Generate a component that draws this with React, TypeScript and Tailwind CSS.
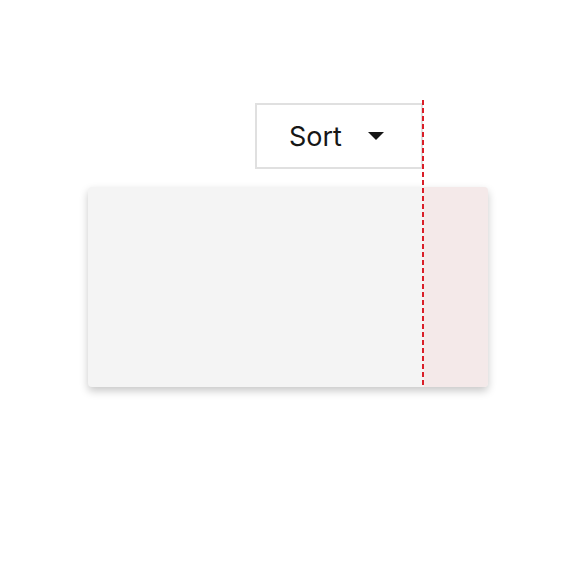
export default function App() {
  return (
    <div className="relative w-[576px] h-[576px] bg-white overflow-hidden font-['Inter','Liberation_Sans',sans-serif]">
      <div className="flex flex-col pt-[103px]">
        {/* Sort button */}
        <button className="ml-[255px] w-[168px] h-[66px] border-2 border-[#e0e0e0] bg-white flex items-center pl-[32px] text-[27px] text-[#161616] leading-none">
          <span>Sort</span>
          <svg className="ml-[26px]" width="16" height="10" viewBox="0 0 16 10">
            <path d="M0 1 L16 1 L8 9 Z" fill="#161616" />
          </svg>
        </button>

        {/* Card */}
        <div className="ml-[88px] mt-[18px] w-[400px] h-[200px] rounded-[4px] bg-[#f4f4f4] shadow-[0_4px_8px_rgba(0,0,0,0.22)] flex overflow-hidden">
          <div className="w-[336px]" />
          <div className="flex-1 bg-[#f4e9e9]" />
        </div>
      </div>

      {/* dashed guide */}
      <div className="absolute left-[422px] top-[100px] w-[2px] h-[288px] bg-[repeating-linear-gradient(to_bottom,#da1e28_0_5px,transparent_5px_8px)]" />
    </div>
  );
}
